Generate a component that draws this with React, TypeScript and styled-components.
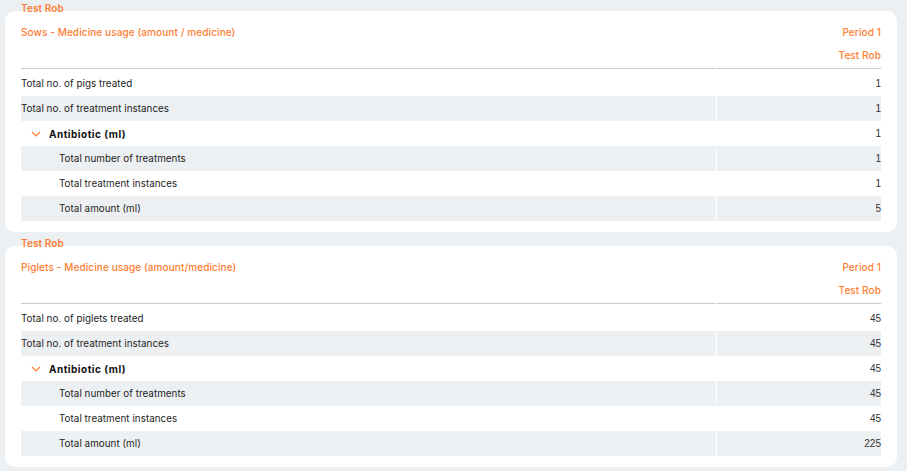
import React from "react";
import styled, { createGlobalStyle } from "styled-components";

const GlobalStyle = createGlobalStyle`
    body {
        margin: 0;
        background: #edf0f3;
        font-family: Inter, "Open Sans", sans-serif;
        color: #1c1c1c;
    }
`;

const ORANGE = "#ff7d33";

export const Page = styled.div`
    //ページ全体
    display: flex;
    flex-direction: column;
    gap: 4px;
    padding: 1px 10px 0 5px;
`;

export const Section = styled.section`
    display: flex;
    flex-direction: column;
`;

export const OwnerLabel = styled.div`
    //カードの上のラベル
    position: relative;
    z-index: 1;
    height: 14px;
    line-height: 14px;
    margin: 0 0 -4px 16px;
    font-size: 10px;
    font-weight: 600;
    letter-spacing: 0.1px;
    color: ${ORANGE};
`;

export const Card = styled.div`
    background: #fff;
    border-radius: 10px;
    padding: 10px 16px 11px;
`;

export const Header = styled.div`
    display: grid;
    grid-template-columns: 1fr 164px;
    column-gap: 1px;
`;

export const HeaderCell = styled.div<{ $right?: boolean }>`
    display: flex;
    flex-direction: column;
    align-items: ${(p) => (p.$right ? "flex-end" : "flex-start")};
    border-bottom: 1px solid #c9c9c9;
    padding-bottom: 1px;
`;

export const HeaderText = styled.div`
    height: 23px;
    line-height: 23px;
    font-size: 10px;
    font-weight: 500;
    letter-spacing: 0.1px;
    color: ${ORANGE};
`;

export const Body = styled.div`
    padding-top: 2px;
`;

export const Row = styled.div<{ $striped?: boolean }>`
    display: grid;
    grid-template-columns: 1fr 164px;
    column-gap: 1px;
    height: 25px;
    & > * {
        background: ${(p) => (p.$striped ? "#edf0f3" : "#fff")};
    }
`;

export const Name = styled.div<{ $level: number; $bold?: boolean }>`
    display: flex;
    align-items: center;
    gap: 8px;
    padding-left: ${(p) => (p.$level === 2 ? 38 : p.$level === 1 ? 10 : 0)}px;
    font-size: ${(p) => (p.$bold ? 10 : 9.8)}px;
    font-weight: ${(p) => (p.$bold ? 700 : 400)};
    letter-spacing: ${(p) => (p.$bold ? 0.5 : 0.05)}px;
    color: ${(p) => (p.$bold ? "#111" : "#1c1c1c")};
`;

export const Value = styled.div`
    display: flex;
    align-items: center;
    justify-content: flex-end;
    font-family: "Liberation Sans", Arial, sans-serif;
    font-size: 10px;
    color: #333;
`;

const Chevron = () => (
    <svg width="10" height="6" viewBox="0 0 10 6" fill="none">
        <polyline points="1,1 5,5 9,1" stroke={ORANGE} strokeWidth="1.2" />
    </svg>
);

type Line = { name: string; value: string; level: number; group?: boolean };

const makeLines = (animal: string, v: string[]): Line[] => [
    { name: `Total no. of ${animal} treated`, value: v[0], level: 0 },
    { name: "Total no. of treatment instances", value: v[1], level: 0 },
    { name: "Antibiotic (ml)", value: v[2], level: 1, group: true },
    { name: "Total number of treatments", value: v[3], level: 2 },
    { name: "Total treatment instances", value: v[4], level: 2 },
    { name: "Total amount (ml)", value: v[5], level: 2 },
];

const reports = [
    {
        title: "Sows - Medicine usage (amount / medicine)",
        lines: makeLines("pigs", ["1", "1", "1", "1", "1", "5"]),
    },
    {
        title: "Piglets - Medicine usage (amount/medicine)",
        lines: makeLines("piglets", ["45", "45", "45", "45", "45", "225"]),
    },
];

export default function App() {
    return (
        <>
            <GlobalStyle />
            <Page>
                {reports.map((r) => (
                    <Section key={r.title}>
                        <OwnerLabel>Test Rob</OwnerLabel>
                        <Card>
                            <Header>
                                <HeaderCell>
                                    <HeaderText>{r.title}</HeaderText>
                                </HeaderCell>
                                <HeaderCell $right>
                                    <HeaderText>Period 1</HeaderText>
                                    <HeaderText>Test Rob</HeaderText>
                                </HeaderCell>
                            </Header>
                            <Body>
                                {r.lines.map((l, i) => (
                                    <Row key={l.name} $striped={i % 2 === 1}>
                                        <Name $level={l.level} $bold={l.group}>
                                            {l.group && <Chevron />}
                                            {l.name}
                                        </Name>
                                        <Value>{l.value}</Value>
                                    </Row>
                                ))}
                            </Body>
                        </Card>
                    </Section>
                ))}
            </Page>
        </>
    );
}
